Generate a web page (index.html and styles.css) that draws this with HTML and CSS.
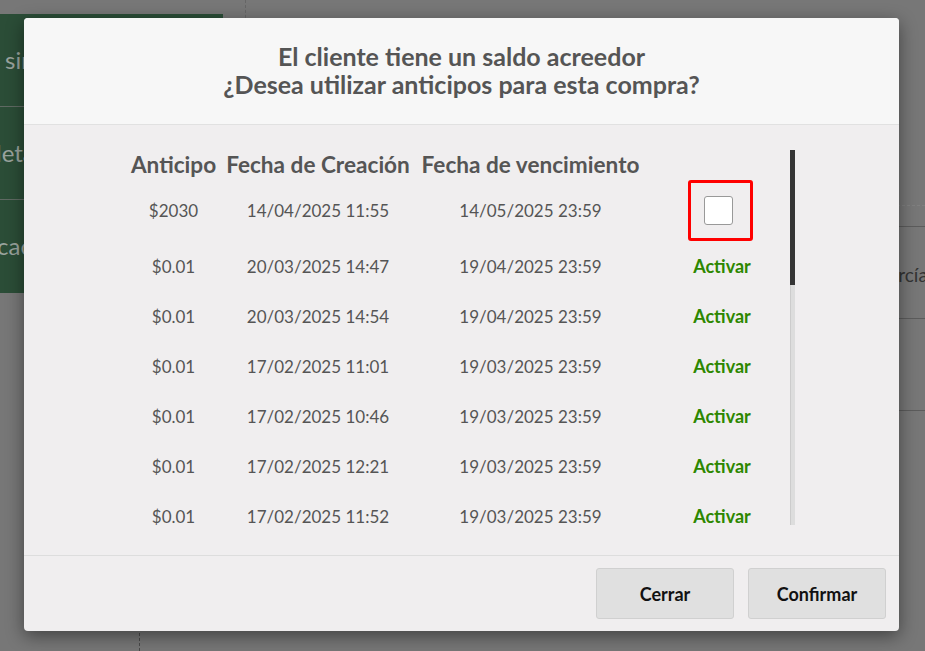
FILE: index.html
```html
<!DOCTYPE html>
<html lang="es">
<head>
<meta charset="utf-8">
<title>Anticipos</title>
<link rel="stylesheet" href="styles.css">
</head>
<body>
<div class="page">
  <div class="left">
    <aside class="side">
      <div class="side-item i1">sin</div>
      <div class="side-item i2">leta</div>
      <div class="side-item i3">caci</div>
    </aside>
    <div class="side-rest"></div>
  </div>
  <main class="main">
    <div class="main-top"></div>
    <div class="main-row"><span class="cell-name">García López</span></div>
    <div class="main-row"></div>
  </main>
</div>

<div class="modal">
  <div class="modal-header">
    <h4 class="modal-title">El cliente tiene un saldo acreedor<br>¿Desea utilizar anticipos para esta compra?</h4>
  </div>
  <div class="modal-body">
    <div class="scroll-wrap">
      <div class="scroll">
        <table class="tbl">
          <colgroup>
            <col class="c1"><col class="c2"><col class="c3"><col class="c4">
          </colgroup>
          <thead>
            <tr><th>Anticipo</th><th>Fecha de Creación</th><th>Fecha de vencimiento</th><th></th></tr>
          </thead>
          <tbody>
            <tr class="first"><td>$2030</td><td>14/04/2025 11:55</td><td>14/05/2025 23:59</td><td class="act"><span class="hl"><span class="chk"></span></span></td></tr>
            <tr><td>$0.01</td><td>20/03/2025 14:47</td><td>19/04/2025 23:59</td><td class="act"><a class="activar">Activar</a></td></tr>
            <tr><td>$0.01</td><td>20/03/2025 14:54</td><td>19/04/2025 23:59</td><td class="act"><a class="activar">Activar</a></td></tr>
            <tr><td>$0.01</td><td>17/02/2025 11:01</td><td>19/03/2025 23:59</td><td class="act"><a class="activar">Activar</a></td></tr>
            <tr><td>$0.01</td><td>17/02/2025 10:46</td><td>19/03/2025 23:59</td><td class="act"><a class="activar">Activar</a></td></tr>
            <tr><td>$0.01</td><td>17/02/2025 12:21</td><td>19/03/2025 23:59</td><td class="act"><a class="activar">Activar</a></td></tr>
            <tr><td>$0.01</td><td>17/02/2025 11:52</td><td>19/03/2025 23:59</td><td class="act"><a class="activar">Activar</a></td></tr>
          </tbody>
        </table>
      </div>
      <div class="sbar"><div class="sthumb"></div></div>
    </div>
  </div>
  <div class="modal-footer">
    <button class="btn">Cerrar</button>
    <button class="btn">Confirmar</button>
  </div>
</div>
</body>
</html>
```

FILE: styles.css
```css
html, body {
  margin: 0;
  padding: 0;
}
body {
  background: #777777;
  font-family: Lato, "Open Sans", sans-serif;
  width: 925px;
  height: 651px;
  overflow: hidden;
  position: relative;
}

/* background page (dimmed) */
.page {
  display: flex;
  align-items: flex-start;
  height: 651px;
}
.left {
  flex: 0 0 223px;
  height: 651px;
  display: flex;
  flex-direction: column;
}
.side {
  margin-top: 14px;
  background: #2b4d37;
  display: flex;
  flex-direction: column;
}
.side-rest {
  flex: 1;
  margin-left: 139px;
  border-left: 1px dashed #4a4a4a;
}
.side-item {
  height: 92px;
  border-bottom: 1px solid #5f6a63;
  color: #9aa39d;
  font-size: 24px;
  line-height: 92px;
  white-space: nowrap;
  overflow: hidden;
}
.side-item.i3 { border-bottom: 0; height: 93px; }
.i1 { padding-left: 5px; }
.i2 { text-indent: -4px; }
.i3 { text-indent: -3px; }

.main {
  margin-left: 22px;
  flex: 1;
  min-width: 0;
  height: 651px;
  overflow: hidden;
}
.main-top {
  height: 205px;
  border-left: 1px dashed #666;
  border-bottom: 1px dashed #808080;
  margin-bottom: 20px;
}
.main-row {
  height: 91px;
  border-top: 1px solid #5c5c5c;
  display: flex;
  align-items: center;
  padding-left: 630px;
  white-space: nowrap;
}
.main-row:last-child { border-bottom: 1px solid #5c5c5c; }
.cell-name {
  font-size: 19px;
  color: #333;
  padding-top: 4px;
}

/* modal */
.modal {
  position: absolute;
  top: 18px;
  left: 24px;
  width: 875px;
  background: #f0eeef;
  border-radius: 4px;
  box-shadow: 0 5px 18px rgba(0, 0, 0, 0.45);
  overflow: hidden;
}
.modal-header {
  background: #f7f7f7;
  border-bottom: 1px solid #e1e1e1;
  padding: 24px 15px 26px;
  text-align: center;
}
.modal-title {
  margin: 0;
  font-size: 25px;
  line-height: 28px;
  font-weight: 700;
  color: #555;
}
.modal-body {
  padding: 25px 0 30px;
}
.scroll-wrap {
  width: 667px;
  height: 375px;
  margin: 0 auto;
  display: flex;
}
.scroll {
  flex: 1;
  overflow: hidden;
}
.sbar {
  flex: 0 0 5px;
  background: #dddddd;
  box-shadow: inset 1px 0 0 #cccccc;
}
.sthumb {
  height: 135px;
  background: #353535;
}

.tbl {
  width: 662px;
  table-layout: fixed;
  border-collapse: collapse;
  color: #555;
}
.c1 { width: 91px; }
.c2 { width: 198px; }
.c3 { width: 227px; }
.c4 { width: 146px; }
.tbl th {
  font-size: 22.6px;
  font-weight: 700;
  line-height: 29px;
  padding: 0;
  white-space: nowrap;
  text-align: center;
}
.tbl td {
  font-size: 17px;
  height: 50px;
  padding: 0;
  text-align: center;
  vertical-align: middle;
  white-space: nowrap;
}
.tbl tr.first td { height: 62px; }
.tbl td.act { padding-left: 7px; }
.hl {
  display: inline-flex;
  border: 3px solid #ff0000;
  border-radius: 3px;
  padding: 13px 17px 13px 13px;
  vertical-align: middle;
}
.chk {
  width: 27px;
  height: 27px;
  background: #fff;
  border: 1.5px solid #999;
  border-radius: 3px;
}
.activar {
  display: inline-block;
  color: #2d8700;
  font-weight: 700;
  font-size: 18px;
  padding-left: 3px;
}

.modal-footer {
  border-top: 1px solid #dddddd;
  padding: 12px 13px 12px;
  display: flex;
  justify-content: flex-end;
  gap: 14px;
}
.btn {
  width: 138px;
  height: 51px;
  background: #e0e0e0;
  border: 1px solid #d0d0d0;
  border-radius: 3px;
  font-family: Lato, "Open Sans", sans-serif;
  font-weight: 700;
  font-size: 18px;
  color: #111;
  padding: 0;
}
```
